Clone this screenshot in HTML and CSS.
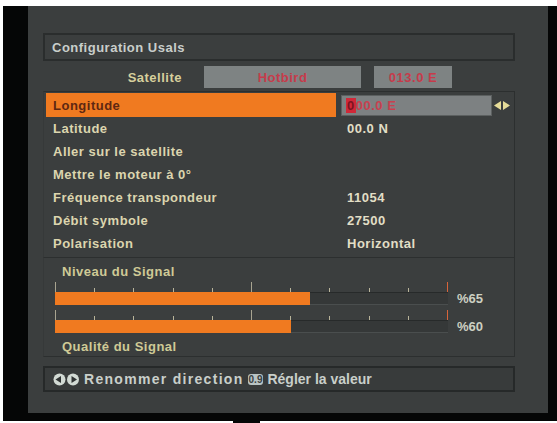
FILE: index.html
```html
<!DOCTYPE html>
<html lang="fr">
<head>
    <meta charset="UTF-8">
    <title>Configuration Usals</title>
    <link rel="stylesheet" href="styles.css">
</head>
<body>

    <div class="screen">
        <div class="osd">
            <div class="title-box">Configuration Usals</div>

            <div class="sat-row">
                <span class="sat-label">Satellite</span>
                <span class="sat-field sat-name">Hotbird</span>
                <span class="sat-field sat-pos">013.0 E</span>
            </div>

            <div class="menu">
                <div class="row active">
                    <span class="label">Longitude</span>
                    <span class="edit"><span class="cursor">0</span>00.0 E</span>
                    <svg class="arrows" width="16" height="9" viewBox="0 0 16 9">
                        <polygon points="0,4.5 7,0 7,9" fill="#e6dc98"/>
                        <polygon points="9,0 16,4.5 9,9" fill="#e6dc98"/>
                    </svg>
                </div>
                <div class="row"><span class="label">Latitude</span><span class="value">00.0 N</span></div>
                <div class="row"><span class="label">Aller sur le satellite</span></div>
                <div class="row"><span class="label">Mettre le moteur à 0°</span></div>
                <div class="row"><span class="label">Fréquence transpondeur</span><span class="value">11054</span></div>
                <div class="row"><span class="label">Débit symbole</span><span class="value">27500</span></div>
                <div class="row"><span class="label">Polarisation</span><span class="value">Horizontal</span></div>
            </div>

            <div class="signal">
                <div class="sig-title">Niveau du Signal</div>
                <div class="meter">
                    <div class="gauge">
                        <div class="scale">
                            <i class="tick tall"></i><i class="tick"></i><i class="tick"></i><i class="tick"></i><i class="tick"></i>
                            <i class="tick tall"></i><i class="tick"></i><i class="tick"></i><i class="tick"></i><i class="tick"></i>
                            <i class="tick tall end"></i>
                        </div>
                        <div class="bar"><div class="fill" style="width: 65%"></div></div>
                    </div>
                    <span class="pct">%65</span>
                </div>
                <div class="meter">
                    <div class="gauge">
                        <div class="scale">
                            <i class="tick tall"></i><i class="tick"></i><i class="tick"></i><i class="tick"></i><i class="tick"></i>
                            <i class="tick tall"></i><i class="tick"></i><i class="tick"></i><i class="tick"></i><i class="tick"></i>
                            <i class="tick tall end"></i>
                        </div>
                        <div class="bar"><div class="fill" style="width: 60%"></div></div>
                    </div>
                    <span class="pct">%60</span>
                </div>
                <div class="sig-title bottom">Qualité du Signal</div>
            </div>

            <div class="help">
                <svg class="lr-keys" width="27" height="13" viewBox="0 0 27 13">
                    <circle cx="6.5" cy="6.5" r="6" fill="#d2dad4"/>
                    <polygon points="2.5,6.5 8,3 8,10" fill="#303434"/>
                    <circle cx="20" cy="6.5" r="6" fill="#d2dad4"/>
                    <polygon points="18.5,3 24,6.5 18.5,10" fill="#303434"/>
                </svg>
                <span class="help-text wide">Renommer direction</span>
                <span class="num-key">0.9</span>
                <span class="help-text">Régler la valeur</span>
            </div>
        </div>
    </div>
    <div class="stand"></div>

</body>
</html>
```

FILE: styles.css
```css
* {
    box-sizing: border-box;
}
body {
    margin: 0;
    background-color: #fff;
    font-family: 'Liberation Sans', Arial, sans-serif;
    font-weight: bold;
    font-size: 13px;
    letter-spacing: 0.5px;
}
.screen {
    margin: 6px 0 0 3px;
    width: 554px;
    height: 415px;
    padding-left: 25px;
    background-color: #050606;
}
.stand {
    margin-left: 233px;
    width: 27px;
    height: 2px;
    background-color: #050606;
}
.osd {
    width: 520px;
    height: 407px;
    padding: 27px 0 0 15px;
    background-color: #3b3e3e;
}

/* titre */
.title-box {
    width: 472px;
    height: 28px;
    padding-left: 7px;
    display: flex;
    align-items: center;
    border: 2px solid #2a2d2d;
    color: #c9cecb;
}

/* satellite */
.sat-row {
    margin-top: 5px;
    height: 22px;
    display: flex;
    align-items: center;
}
.sat-label {
    width: 139px;
    text-align: right;
    color: #d6cf9c;
}
.sat-field {
    height: 22px;
    display: flex;
    align-items: center;
    justify-content: center;
    background-color: #7e8383;
    color: #c63b4b;
}
.sat-name {
    width: 157px;
    margin-left: 22px;
}
.sat-pos {
    width: 78px;
    margin-left: 13px;
}

/* liste */
.menu {
    margin-top: 3px;
    width: 472px;
    padding: 1px 0 2px 2px;
    border: 1px solid #2c2f2f;
    border-left-color: #363939;
}
.row {
    display: flex;
    align-items: center;
    height: 23px;
    line-height: 15px;
}
.row .label {
    width: 290px;
    padding-left: 7px;
    color: #dcd5ae;
}
.row .value {
    padding-left: 11px;
    color: #e2dec6;
}
.row.active {
    height: 24px;
}
.row.active .label {
    height: 24px;
    display: flex;
    align-items: center;
    background-color: #f07a20;
    color: #5e2812;
}
.edit {
    margin-left: 5px;
    width: 151px;
    height: 21px;
    padding-left: 4px;
    display: flex;
    align-items: center;
    background-color: #7d8182;
    border: 1px solid #5c6060;
    color: #c8404f;
}
.cursor {
    padding: 0 1px;
    line-height: 15px;
    background-color: #d02838;
    color: #7a1420;
}
.arrows {
    margin-left: 2px;
}

/* signal */
.signal {
    width: 472px;
    height: 99px;
    padding: 6px 0 0 11px;
    border: 1px solid #2c2f2f;
    border-top: none;
    border-left-color: #363939;
}
.sig-title {
    padding-left: 7px;
    line-height: 15px;
    color: #cfca96;
}
.sig-title.bottom {
    margin-top: 6px;
}
.meter {
    margin-top: 3px;
    display: flex;
    align-items: flex-end;
}
.meter + .meter {
    margin-top: 5px;
}
.gauge {
    width: 393px;
}
.scale {
    height: 10px;
    display: flex;
    justify-content: space-between;
    align-items: flex-end;
}
.tick {
    width: 1px;
    height: 4px;
    background-color: #b9b49a;
}
.tick.tall {
    height: 10px;
    background-color: #a8a490;
}
.tick.end {
    background-color: #d8643a;
}
.bar {
    height: 13px;
    background-color: #353838;
    border-top: 1px solid #272a2a;
    border-bottom: 1px solid #4a4e4e;
}
.fill {
    height: 100%;
    margin-top: -1px;
    height: 13px;
    background-color: #f07a20;
}
.pct {
    margin-left: 9px;
    line-height: 13px;
    color: #cdd0c2;
    letter-spacing: 0;
}

/* aide */
.help {
    margin-top: 9px;
    width: 472px;
    height: 26px;
    padding-left: 8px;
    display: flex;
    align-items: center;
    border: 2px solid #262929;
    background-color: #383b3b;
    font-size: 14px;
    color: #c9cfca;
}
.help-text {
    letter-spacing: 0;
}
.help-text.wide {
    margin-left: 4px;
    letter-spacing: 1.3px;
}
.num-key {
    margin: 0 4px;
    padding: 0 1px;
    height: 11px;
    display: flex;
    align-items: center;
    border-radius: 3px;
    background-color: #b9c4c4;
    color: #3a4040;
    font-size: 10px;
    letter-spacing: 0;
}
```
